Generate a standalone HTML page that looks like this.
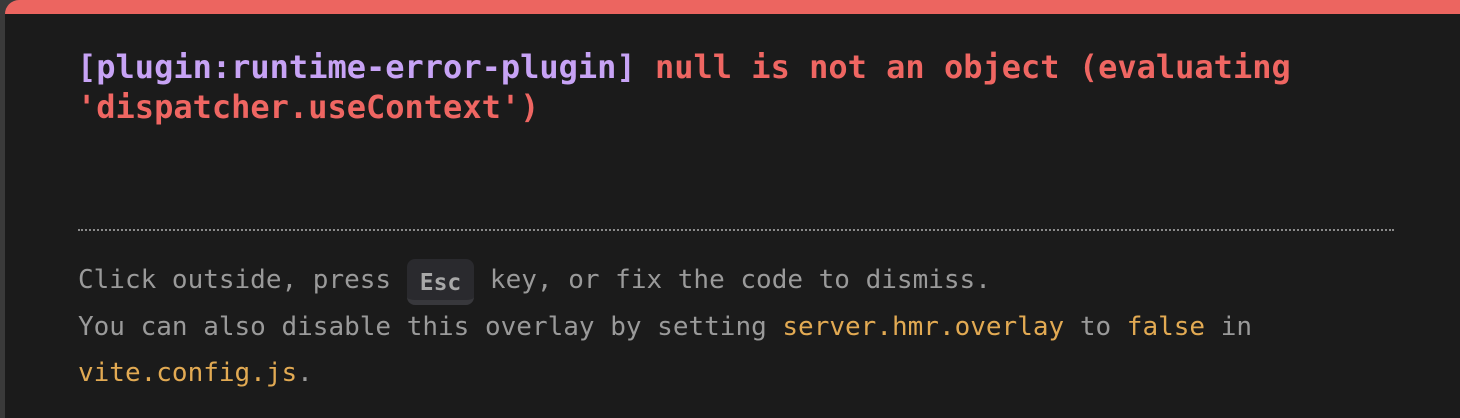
<!DOCTYPE html>
<html><head><style>
html,body{margin:0;padding:0;width:1460px;height:418px;overflow:hidden;background:#3a3a3a;}
.win{position:absolute;left:5px;top:0;width:1460px;height:418px;background:#1b1b1b;border-top:14px solid #ec6560;border-top-left-radius:14px;box-sizing:border-box;}
.msg{position:absolute;left:72px;top:33px;font-family:"DejaVu Sans Mono","Liberation Mono",monospace;font-weight:bold;font-size:32px;line-height:40px;color:#ef6662;white-space:pre;}
.p{color:#c7a3f5;}
.hr{position:absolute;left:73px;top:215px;width:1316px;height:0;border-top:2px dotted #8a8a8a;}
.tip{position:absolute;left:73px;top:243px;font-family:"DejaVu Sans Mono","Liberation Mono",monospace;font-size:26px;color:#9a9a9a;white-space:pre;}
.tip div{height:46.5px;line-height:46.5px;}
.y{color:#e2aa53;}
.kbd{display:inline-block;background:#2a2a2e;border-radius:8px;border-bottom:5px solid #38383c;padding:4px 13px 0;height:37px;line-height:41px;margin:-10px 0;font-weight:bold;color:#a8a8a8;font-size:23px;vertical-align:2px;position:relative;top:4px;}
</style></head><body>
<div class="win">
<div class="msg"><span class="p">[plugin:runtime-error-plugin]</span> null is not an object (evaluating
'dispatcher.useContext')</div>
<div class="hr"></div>
<div class="tip"><div>Click outside, press <span class="kbd">Esc</span> key, or fix the code to dismiss.</div><div>You can also disable this overlay by setting <span class="y">server.hmr.overlay</span> to <span class="y">false</span> in</div><div><span class="y">vite.config.js</span>.</div></div>
</div>
</body></html>
